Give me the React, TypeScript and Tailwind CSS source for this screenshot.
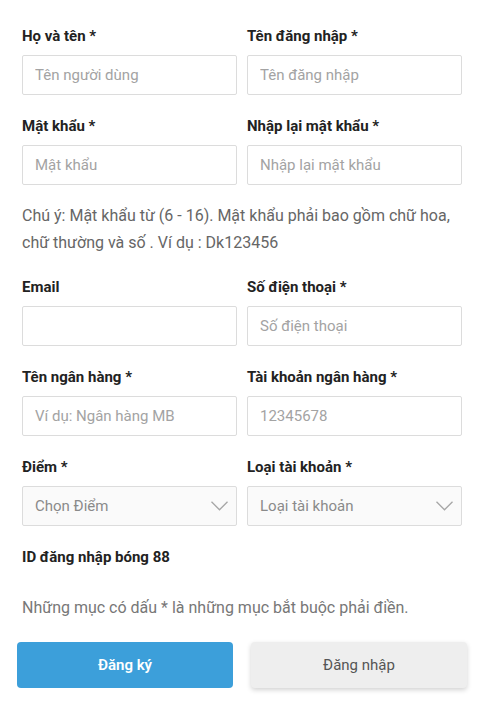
type Field = { label: string; placeholder?: string; select?: boolean };

const rows: Field[][] = [
  [
    { label: "Họ và tên *", placeholder: "Tên người dùng" },
    { label: "Tên đăng nhập *", placeholder: "Tên đăng nhập" },
  ],
  [
    { label: "Mật khẩu *", placeholder: "Mật khẩu" },
    { label: "Nhập lại mật khẩu *", placeholder: "Nhập lại mật khẩu" },
  ],
];

const rows2: Field[][] = [
  [
    { label: "Email", placeholder: "" },
    { label: "Số điện thoại *", placeholder: "Số điện thoại" },
  ],
  [
    { label: "Tên ngân hàng *", placeholder: "Ví dụ: Ngân hàng MB" },
    { label: "Tài khoản ngân hàng *", placeholder: "12345678" },
  ],
  [
    { label: "Điểm *", placeholder: "Chọn Điểm", select: true },
    { label: "Loại tài khoản *", placeholder: "Loại tài khoản", select: true },
  ],
];

function Chevron() {
  return (
    <svg width="17" height="10" viewBox="0 0 17 10" fill="none" className="mr-[8px]">
      <path d="M0.5 0.8 L8.5 8.8 L16.5 0.8" stroke="#a6a6a6" strokeWidth="1.3" />
    </svg>
  );
}

function FieldBox({ f }: { f: Field }) {
  return (
    <div>
      <label className="block h-5 leading-5 text-[15px] font-bold text-[#222]">{f.label}</label>
      {f.select ? (
        <div className="mt-[9px] h-10 flex items-center justify-between pl-3 bg-[#fafafa] border border-[#dcdcdc] rounded-[2px]">
          <span className="text-[15px] text-[#8a8a8a]">{f.placeholder}</span>
          <Chevron />
        </div>
      ) : (
        <input
          type="text"
          placeholder={f.placeholder}
          className="mt-[9px] w-full h-10 px-3 bg-white border border-[#dcdcdc] rounded-[2px] text-[15px] outline-none placeholder:text-[#a3a3a3]"
        />
      )}
    </div>
  );
}

export default function App() {
  return (
    <div className="w-[484px] h-[705px] bg-white pt-[26px] font-['Roboto','Liberation_Sans',sans-serif] overflow-hidden">
      <div className="px-[22px]">
        <div className="grid grid-cols-2 gap-x-[10px] gap-y-[21px]">
          {rows.flat().map((f) => (
            <FieldBox key={f.label} f={f} />
          ))}
        </div>

        <p className="mt-[17px] text-[16px] leading-[27px] text-[#666]">
          Chú ý: Mật khẩu từ (6 - 16). Mật khẩu phải bao gồm chữ hoa, chữ thường và số . Ví dụ : Dk123456
        </p>

        <div className="mt-[21px] grid grid-cols-2 gap-x-[10px] gap-y-[21px]">
          {rows2.flat().map((f) => (
            <FieldBox key={f.label} f={f} />
          ))}
        </div>

        <p className="mt-[21px] h-5 leading-5 text-[15px] font-bold text-[#222]">ID đăng nhập bóng 88</p>

        <p className="mt-[27px] text-[16px] leading-[27px] text-[#777]">
          Những mục có dấu * là những mục bắt buộc phải điền.
        </p>
      </div>

      <div className="mt-[21px] px-[17px] grid grid-cols-2 gap-[18px]">
        <button className="h-[46px] rounded bg-[#3c9fda] text-white text-[15px] font-semibold">Đăng ký</button>
        <button className="h-[46px] rounded bg-[#eeeeee] text-[#555] text-[15px] shadow-[0_2px_5px_rgba(0,0,0,0.18)]">
          Đăng nhập
        </button>
      </div>
    </div>
  );
}
